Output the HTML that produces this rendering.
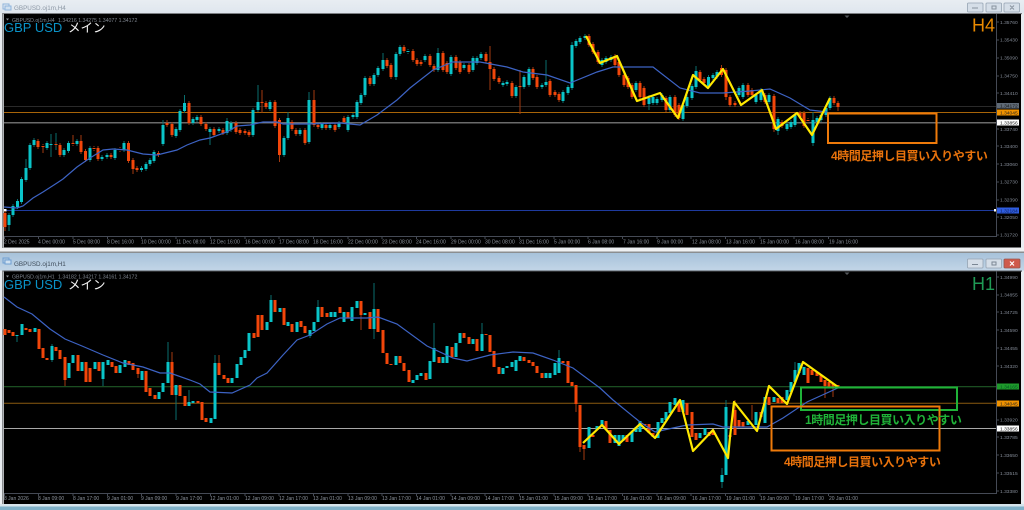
<!DOCTYPE html>
<html lang="ja"><head><meta charset="utf-8"><title>GBPUSD</title>
<style>
html,body{margin:0;padding:0;width:1024px;height:510px;overflow:hidden;background:#e9edf1}
svg{display:block;filter:blur(.35px)}
text{font-family:"Liberation Sans","Noto Sans CJK JP",sans-serif}
.ax text{font-size:5px;fill:#8b929c}
.pr text{font-size:4.9px;fill:#858c98}
.hd{font-size:5.2px;fill:#7f8690}
.jp{font-size:12px;font-weight:700;letter-spacing:-.45px}
.bt{fill:#d5dee8;stroke:#95a3b2;stroke-width:.8}
</style></head><body>
<svg width="1024" height="510" viewBox="0 0 1024 510" xmlns="http://www.w3.org/2000/svg">
<defs>
<linearGradient id="t1" x1="0" y1="0" x2="0" y2="1"><stop offset="0" stop-color="#e8edf2"/><stop offset="1" stop-color="#dfe6ee"/></linearGradient>
<linearGradient id="t2" x1="0" y1="0" x2="0" y2="1"><stop offset="0" stop-color="#a7c2da"/><stop offset="1" stop-color="#c2d5e7"/></linearGradient>
<path id="a" d="M9 215V225M13 206V215M17.5 201V207M21.5 179V202M26 168V180M30 145V168M34 140V145M47 143V148M51 144V145M64 150V155M68.5 143V151M77 141V144M90 148V160M102 157V159M107 155V157M115 150V158M124 143V150M141.5 168V170M146 164V169M150 160V164M154 152V161M163 125V144M176 129V136M180 111V130M184.5 103V111M193 119V123M197 117V120M210 129V132M219 129V131M227 121V133M231 123V130M253 110V135M258 102V110M270 102V109M284 138V155M288 118V138M300 130V134M309 100V142M322 124V128M330 125V128M339 123V127M348 117V130M353 115V117M357 102V117M361 95V103M365 78V95M374 75V84M378 68V75M383 60V69M396 54V77M400 47V54M408 51V52M425 56V60M438 53V70M451 57V74M464 65V68M473 58V70M477 58V63M481 54V58M503 83V85M507 82V84M516 87V96M524 77V87M529 69V85M542 85V87M546 82V85M563 92V101M568 87V93M572 45V88M576 41V46M580 38V42M585 36V38M602 60V65M606 58V62M611 57V60M636 83V90M649 98V104M653 97V103M657 99V103M662 95V100M670 97V110M683 105V119M687 97V106M692 86V98M696 71V87M708.5 77V86M713 75V78M717 72V77M739 88V95M743 85V97M756 95V102M761 90V100M769 95V102M778 119V131M787 124V129M791 122V127M795 115V125M813 120V143M817 118V122M821 115V120M826 108V115M830 98V108"/>
<path id="b" d="M5 213V227M38 141V147M43 146V147M56 144V145M60 145V155M73 143V144M81 141V152M85.5 151V160M94 148V149M98 148V159M111 155V157M120 149V150M128.5 143V161M133 160V169M137 168V170M158.5 153V155M167 123V125M172 124V135M189 103V123M201 117V124M206 124V129M214 129V135M223 130V133M236 123V132M240 130V133M245 131V133M249 132V135M262 102V103M266 103V107M275 102V126M279.5 120V155M292 122V129M296 130V134M305 130V143M314 100V125M318 125V127M326 125V128M335 125V130M344 118V122M370 78V84M387 60V66M391 65V77M404 47V51M413 51V60M417 60V64M421 62V64M430 56V65M434 66V70M443 53V70M447 63V72M456 57V68M460 62V72M469 65V72M486 54V61M490 62V69M494 69V79M499 78V82M512 83V96M520 86V87M533 69V78M537 77V87M550 81V95M555 92V95M559 94V100M589 36V45M593 44V52M598 52V62M615 56V65M619 62V75M624 75V85M628 78V87M632 85V97M640 83V97M644 88V105M666 98V110M675 97V115M679 105V118M700 72V80M704 79V83M721.5 68V75M726 70V97M730 97V105M735 103V105M748 85V95M752 90V95M765 95V102M774 96V129M782 122V126M800 113V117M804 113V126M808 120V121M834 98V103M838 103V107"/>
<path id="c" d="M17 335V336M22 324V335M35 328V332M52 346V360M69 363V378M73 355V363M82 362V371M95 362V369M103 362V379M108 360V365M120 365V373M125 360V367M142 371V380M159 392V399M163 383V392M168 362V383M176 385V395M189 402V406M193 401V403M211 418V423M215 363V419M232 378V383M237 364V378M241 357V365M245 350V358M249 333V351M267 322V330M271 300V322M280 308V312M288 322V326M297 322V332M310 330V336M314 322V331M318 307V322M331 312V317M335 312V317M344 312V322M352 307V321M357 301V308M365 313V315M374 309V329M396 356V365M413 380V383M417 375V380M421 373V376M430 361V379M434 348V362M443 357V363M447 346V363M456 343V357M460 333V343M473 339V344M482 334V351M503 368V374M507 366V368M512 362V367M516 360V371M520 356V361M546 373V378M550 373V378M555 363V375M559 358V373M589 427V448M597 426V430M602 420V425M615 435V443M619 435V446M623 435V441M632 432V442M636 427V432M640 421V432M658 422V438M662 418V423M666 412V420M670 402V413M675 398V405M683 400V412M700 433V438M705 428V435M722 475V482M726 407V475M748 421V425M756 412V425M765 397V423M774 397V402M787 390V400M791 382V392M795 370V382M799 363V373M804 367V375"/>
<path id="d" d="M5 329V335M9 330V333M13 332V336M26 328V330M30 329V332M39 329V349M43 348V358M47 358V360M56 347V351M60 350V359M65 357V380M78 355V371M86 362V382M90 368V382M99 362V371M112 362V367M116 366V373M129 361V365M133 363V370M138 368V374M146 371V392M150 388V396M155 395V399M172 362V395M180 385V396M185 396V406M198 401V403M202 402V420M206 418V422M219 363V375M224 375V379M228 378V383M254 333V338M258 315V337M262 315V330M275 300V312M284 308V325M292 324V332M301 321V327M305 326V333M322 307V317M327 313V317M340 307V313M348 312V318M361 301V315M370 312V329M378 309V332M383 330V353M387 353V364M391 364V365M400 356V363M404 363V371M409 370V382M426 373V380M439 357V363M452 347V357M464 333V338M469 337V344M477 339V351M486 334V335M490 335V352M494 351V367M499 367V374M524 357V361M529 360V363M533 362V366M537 366V373M542 373V378M563 361V363M568 361V383M572 382V386M576 385V404M580 405V447M584 445V449M593 435V437M606 421V430M610 430V443M627 435V442M645 424V425M649 424V433M653 433V437M679 402V412M687 403V415M692 412V437M696 433V440M709 432V436M713 430V435M730 435V437M735 410V435M739 420V427M743 422V427M761 412V417M769 397V405M778 398V403M782 397V403M808 368V383M812 370V375M817 372V376M821 375V382M825 380V386M829 382V387M833 383V388M838 385V387"/>
</defs>
<rect width="1024" height="510" fill="#e9edf1"/>
<rect width="1024" height="13" fill="url(#t1)"/>
<rect x="3" y="4" width="6" height="5" fill="none" stroke="#8fb4dc" stroke-width="1"/><rect x="5" y="6" width="6" height="4" fill="#cfe0f0" stroke="#8fb4dc" stroke-width="1"/>
<text x="14" y="10" font-size="6.3" fill="#8e99a6">GBPUSD.oj1m,H4</text>
<rect class="bt" x="967.5" y="3" width="15.5" height="9" rx="1"/><rect class="bt" x="986" y="3" width="15.5" height="9" rx="1"/><rect class="bt" x="1004" y="3" width="15.5" height="9" rx="1"/>
<path d="M972 8H978M992 6H996V9H992ZM1010 5.5L1014 9.5M1014 5.5L1010 9.5" stroke="#88929e" stroke-width="1" fill="none"/>
<rect x="2" y="13" width="1020" height="1.2" fill="#7c7f83"/><rect x="2" y="13" width="1.6" height="235" fill="#8a8d90"/>
<rect x="4" y="14" width="1017" height="233.5" fill="#000"/>

<rect y="248" width="1024" height="3.5" fill="#eef0f2"/><rect y="251.5" width="1024" height="1.5" fill="#8b8e90"/>
<rect y="253" width="1024" height="17.5" fill="url(#t2)"/>
<rect x="3" y="258" width="6" height="5" fill="none" stroke="#6f9fd2" stroke-width="1"/><rect x="5" y="260" width="6" height="4" fill="#cfe0f0" stroke="#6f9fd2" stroke-width="1"/>
<text x="14" y="266" font-size="6.3" fill="#3f4c5a">GBPUSD.oj1m,H1</text>
<rect class="bt" x="967.5" y="259" width="15.5" height="9" rx="1"/><rect class="bt" x="986" y="259" width="15.5" height="9" rx="1"/><rect x="1004" y="259" width="16" height="9" rx="1" fill="#cf5a4c" stroke="#96564e" stroke-width=".8"/>
<path d="M972 264.5H978M992 262H996V265H992Z" stroke="#7b8794" stroke-width="1" fill="none"/><path d="M1010 261.5L1014 265.5M1014 261.5L1010 265.5" stroke="#fff" stroke-width="1.2"/>
<rect x="2" y="270.5" width="1020" height="1.2" fill="#55585c"/><rect x="2" y="270.5" width="1.6" height="235" fill="#8a8d90"/>
<rect x="4" y="271.5" width="1017" height="232.5" fill="#000"/>
<rect y="504" width="1024" height="2.5" fill="#d6e4ec"/><rect y="506.5" width="1024" height="3.5" fill="#7fb1c9"/>

<!-- H4 levels -->
<path d="M4 106.5H996" stroke="#2a2a2a"/>
<path d="M4 112.5H996" stroke="#a86408"/>
<path d="M4 122.8H996" stroke="#8e8e8e" stroke-width="1.2"/>
<path d="M4 210.5H996" stroke="#1e3a9e"/>
<rect x="4" y="209" width="2.5" height="2.5" fill="#fff"/><rect x="994" y="209" width="2.5" height="2.5" fill="#fff"/>
<!-- H1 levels -->
<path d="M4 386.7H996" stroke="#1f5a26" stroke-width="1.2"/>
<path d="M4 403.3H996" stroke="#8a5a10"/>
<path d="M4 428.5H996" stroke="#a8a8a8"/>

<!-- wicks -->
<g stroke-width="1" fill="none">
<g stroke="#0a6e6e">
<use href="#a" y="-2"/><use href="#a" y="2"/>
<path d="M26 159V168M51 134V157M56 133V150M9 225V231M184.5 95V103M163 120V125M258 85V102M288 112V118M309 92V100M383 53V60M438 48V53M520 70V114M546 60V82M572 42V45M649 95V110M696 66V71M813 112V146M778 119V135M227 118V121M210 132V145M396 54V80"/>
<path d="M52 344V362M168 342V362M176 395V420M189 390V402M215 355V363M271 295V300M310 336V338M318 300V307M374 283V339M434 323V348M482 323V334M559 350V358M589 427V437M722 468V488M726 400V407M795 362V370M17 336V342M103 379V386"/>
</g>
<g stroke="#a43a10">
<use href="#b" y="-2"/><use href="#b" y="2"/>
<path d="M5 227V231M43 147V153M73 135V143M81 135V141M133 169V174M262 90V113M279.5 155V162M314 90V100M490 46V62M490 69V90M520 70V114M726 97V100M721.5 65V68M774 129V132M838 107V111M167 120V123"/>
<path d="M172 352V362M219 355V363M576 404V412M580 447V452M584 449V460M735 400V410M825 386V398M833 388V397M752 405V420M138 374V378M65 380V386M361 301V330"/>
</g></g>
<!-- bodies -->
<g stroke-width="3" fill="none">
<use href="#b" stroke="#f2460a"/><use href="#a" stroke="#0ac4c8"/>
<use href="#d" stroke="#f2460a"/><use href="#c" stroke="#0ac4c8"/>
</g>
<!-- MA -->
<polyline fill="none" stroke="#3d63c4" stroke-width="1.2" points="4,207 17,208 23,206 33,198 43,192 57,183 63,179 77,167 90,158 103,150 113,149 127,150 143,154 157,155 177,150 187,145 200,140 210,138 227,132 237,126 250,125 263,122 277,122 283,124 307,124 340,123 360,125 377,115 397,100 410,88 433,70 453,62 480,62 507,67 523,72 547,75 570,83 597,72 613,67 653,67 680,88 700,93 723,93 750,91 770,89 790,98 810,110 827,112"/>
<polyline fill="none" stroke="#3d63c4" stroke-width="1.2" points="4,297 17,307 32,314 50,329 65,339 82,346 103,355 123,363 143,367 160,373 170,373 190,380 200,384 210,392 232,393 250,385 257,378 267,373 283,355 297,340 310,335 327,324 340,318 367,318 378,317 397,324 427,346 453,358 467,361 490,355 513,352 533,353 553,360 573,368 600,388 613,400 640,422 655,432 673,428 687,425 713,424 723,427 767,427 783,418 807,402 840,387"/>
<!-- zigzags -->
<polyline fill="none" stroke="#ffe900" stroke-width="2.2" stroke-linejoin="round" points="586,36 600,63 617,56 637,101 660,93 678,118 693,75 708,88 723,69 741,105 762,90 776,129 797,113 812,135 830,98"/>
<polyline fill="none" stroke="#ffe900" stroke-width="2.2" stroke-linejoin="round" points="583,443 602,425 619,444 640,424 655,438 680,400 693,451 713,430 728,458 730,437 734,402 757,431 769,386 787,404 803,362 838,387"/>
<!-- boxes -->
<rect x="828" y="113.500" width="108.500" height="29.500" fill="none" stroke="#ee7a0a" stroke-width="2"/>
<rect x="801" y="387.500" width="156" height="22.500" fill="none" stroke="#1fb338" stroke-width="2"/>
<rect x="771.500" y="406.500" width="168" height="44" fill="none" stroke="#ee7a0a" stroke-width="2"/>
<text class="jp" x="831" y="160" fill="#e8720c">4時間足押し目買い入りやすい</text>
<text class="jp" x="805" y="424" fill="#1fb338">1時間足押し目買い入りやすい</text>
<text class="jp" x="784" y="466" fill="#e8720c">4時間足押し目買い入りやすい</text>
<!-- headings -->
<path d="M6 18.500h3l-1.500 2zM6 275.500h3l-1.500 2z" fill="#8a8f96"/>
<text class="hd" x="12" y="22">GBPUSD.oj1m,H4</text><text class="hd" x="58" y="22">1.34216 1.34275 1.34077 1.34172</text>
<text class="hd" x="12" y="278.500">GBPUSD.oj1m,H1</text><text class="hd" x="58" y="278.500">1.34182 1.34217 1.34161 1.34172</text>
<text x="4" y="32" font-size="13" fill="#0a93c8">GBP USD</text><text x="68" y="32" font-size="12.500" fill="#f4f4f4">メイン</text>
<text x="4" y="289" font-size="13" fill="#0a93c8">GBP USD</text><text x="68" y="289" font-size="12.500" fill="#f4f4f4">メイン</text>
<text x="972" y="31.500" font-size="18" fill="#ea8a00">H4</text>
<text x="972" y="290" font-size="18" fill="#1f9a55">H1</text>
<path d="M844.500 15.500h5l-2.500 2.500zM844.500 272.500h5l-2.500 2.500z" fill="#55585c"/>
<!-- axes H4 -->
<path d="M996.500 14V236.500H4M996.500 271.500V493.500H4" fill="none" stroke="#454a55"/>
<path stroke="#454a55" d="M4.500 236v3M38.500 236v3M73 236v3M107.500 236v3M141.500 236v3M176 236v3M210.500 236v3M245 236v3M279 236v3M313.500 236v3M348 236v3M382 236v3M416.500 236v3M451 236v3M485 236v3M519.500 236v3M554 236v3M588 236v3M622.500 236v3M657 236v3M691 236v3M725.500 236v3M760 236v3M794 236v3M828.500 236v3
M4.500 493v3M38.500 493v3M73 493v3M107.500 493v3M141.500 493v3M176 493v3M210.500 493v3M245 493v3M279 493v3M313.500 493v3M348 493v3M382 493v3M416.500 493v3M451 493v3M485 493v3M519.500 493v3M554 493v3M588 493v3M622.500 493v3M657 493v3M691 493v3M725.500 493v3M760 493v3M794 493v3M828.500 493v3
M996 22h3M996 40h3M996 58h3M996 76h3M996 93h3M996 129h3M996 146h3M996 164h3M996 182h3M996 200h3M996 217h3M996 235h3
M996 277h3M996 295h3M996 312h3M996 330h3M996 348h3M996 366h3M996 420h3M996 437h3M996 455h3M996 473h3M996 491h3"/>
<g class="ax">
<text x="4" y="243.500">2 Dec 2025</text><text x="38" y="243.500">4 Dec 00:00</text><text x="73" y="243.500">5 Dec 08:00</text><text x="107" y="243.500">8 Dec 16:00</text><text x="141" y="243.500">10 Dec 00:00</text><text x="176" y="243.500">11 Dec 08:00</text><text x="210" y="243.500">12 Dec 16:00</text><text x="245" y="243.500">16 Dec 00:00</text><text x="279" y="243.500">17 Dec 08:00</text><text x="313" y="243.500">18 Dec 16:00</text><text x="348" y="243.500">22 Dec 00:00</text><text x="382" y="243.500">23 Dec 08:00</text><text x="416" y="243.500">24 Dec 16:00</text><text x="451" y="243.500">29 Dec 00:00</text><text x="485" y="243.500">30 Dec 08:00</text><text x="519" y="243.500">31 Dec 16:00</text><text x="554" y="243.500">5 Jan 00:00</text><text x="588" y="243.500">6 Jan 08:00</text><text x="623" y="243.500">7 Jan 16:00</text><text x="657" y="243.500">9 Jan 00:00</text><text x="692" y="243.500">12 Jan 08:00</text><text x="726" y="243.500">13 Jan 16:00</text><text x="760" y="243.500">15 Jan 00:00</text><text x="795" y="243.500">16 Jan 08:00</text><text x="829" y="243.500">19 Jan 16:00</text>
<text x="4" y="500">8 Jan 2026</text><text x="38" y="500">8 Jan 09:00</text><text x="73" y="500">8 Jan 17:00</text><text x="107" y="500">9 Jan 01:00</text><text x="141" y="500">9 Jan 09:00</text><text x="176" y="500">9 Jan 17:00</text><text x="210" y="500">12 Jan 01:00</text><text x="245" y="500">12 Jan 09:00</text><text x="279" y="500">12 Jan 17:00</text><text x="313" y="500">13 Jan 01:00</text><text x="348" y="500">13 Jan 09:00</text><text x="382" y="500">13 Jan 17:00</text><text x="416" y="500">14 Jan 01:00</text><text x="451" y="500">14 Jan 09:00</text><text x="485" y="500">14 Jan 17:00</text><text x="519" y="500">15 Jan 01:00</text><text x="554" y="500">15 Jan 09:00</text><text x="588" y="500">15 Jan 17:00</text><text x="623" y="500">16 Jan 01:00</text><text x="657" y="500">16 Jan 09:00</text><text x="692" y="500">16 Jan 17:00</text><text x="726" y="500">19 Jan 01:00</text><text x="760" y="500">19 Jan 09:00</text><text x="795" y="500">19 Jan 17:00</text><text x="829" y="500">20 Jan 01:00</text>
</g>
<g class="pr">
<text x="1000" y="24">1.35760</text><text x="1000" y="41.500">1.35430</text><text x="1000" y="59.500">1.35090</text><text x="1000" y="77.500">1.34750</text><text x="1000" y="95">1.34410</text><text x="1000" y="131">1.33740</text><text x="1000" y="148">1.33400</text><text x="1000" y="166">1.33060</text><text x="1000" y="183.500">1.32730</text><text x="1000" y="201.500">1.32390</text><text x="1000" y="219">1.32050</text><text x="1000" y="236.500">1.31720</text>
<text x="1000" y="279">1.34990</text><text x="1000" y="296.500">1.34855</text><text x="1000" y="314">1.34725</text><text x="1000" y="332">1.34590</text><text x="1000" y="350">1.34455</text><text x="1000" y="368">1.34320</text><text x="1000" y="421.500">1.33920</text><text x="1000" y="439">1.33785</text><text x="1000" y="457">1.33650</text><text x="1000" y="475">1.33515</text><text x="1000" y="493">1.33380</text>
</g>
<rect x="997" y="103" width="22" height="5.500" fill="#5f6a76"/><text x="1000" y="107.700" font-size="4.900" fill="#111">1.34172</text>
<rect x="997" y="109.500" width="22" height="6" fill="#f09200"/><text x="1000" y="114.500" font-size="4.900" fill="#222">1.34045</text>
<rect x="997" y="119.500" width="22" height="6" fill="#fff"/><text x="1000" y="124.500" font-size="4.900" fill="#111">1.33856</text>
<rect x="997" y="207.500" width="22" height="6" fill="#2f5de0"/><text x="1000" y="212.500" font-size="4.900" fill="#0a1a50">1.32184</text>
<rect x="997" y="383.500" width="22" height="6" fill="#1f9a2c"/><text x="1000" y="388.500" font-size="4.900" fill="#052">1.34165</text>
<rect x="997" y="400.500" width="22" height="6" fill="#f09200"/><text x="1000" y="405.500" font-size="4.900" fill="#222">1.34045</text>
<rect x="997" y="425.500" width="22" height="6" fill="#fff"/><text x="1000" y="430.500" font-size="4.900" fill="#111">1.33856</text>
</svg>
</body></html>
